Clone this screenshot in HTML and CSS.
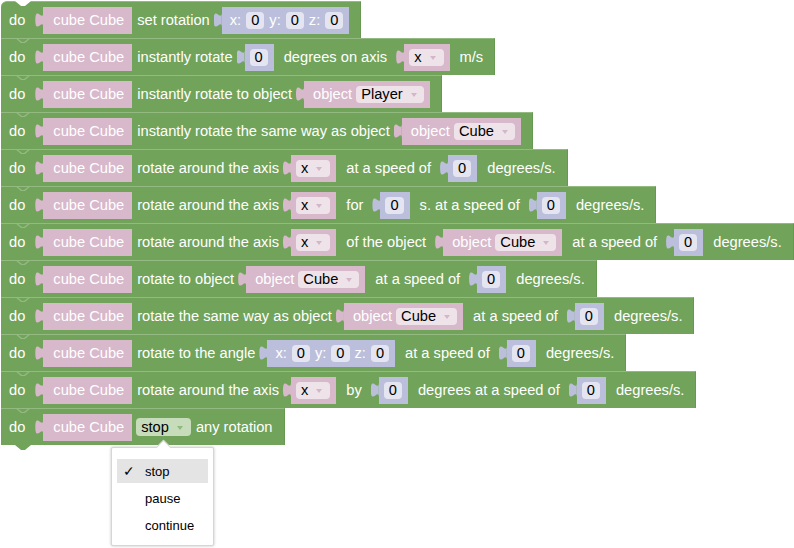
FILE: index.html
```html
<!DOCTYPE html>
<html lang="en">
<head>
    <meta charset="UTF-8">
    <title>Rotation blocks</title>
    <link rel="stylesheet" href="styles.css">
</head>
<body>

    <!-- Stos bloków "do" -->
    <div class="stack">

        <div class="blk first">
            <span class="do">do</span>
            <span class="inp pink"><span class="tab"></span><span class="body"><span class="txt">cube Cube</span></span></span>
            <span class="lbl">set rotation</span>
            <span class="inp blue"><span class="tab"></span><span class="body xyz"><span class="ax">x:</span><span class="fld">0</span><span class="ax">y:</span><span class="fld">0</span><span class="ax">z:</span><span class="fld">0</span></span></span>
        </div>

        <div class="blk">
            <span class="do">do</span>
            <span class="inp pink"><span class="tab"></span><span class="body"><span class="txt">cube Cube</span></span></span>
            <span class="lbl">instantly rotate</span>
            <span class="inp blue"><span class="tab"></span><span class="body num"><span class="fld">0</span></span></span>
            <span class="lbl sp">degrees on axis</span>
            <span class="inp pink"><span class="tab"></span><span class="body dd"><span class="fld">x<i class="arr"></i></span></span></span>
            <span class="lbl sp">m/s</span>
        </div>

        <div class="blk">
            <span class="do">do</span>
            <span class="inp pink"><span class="tab"></span><span class="body"><span class="txt">cube Cube</span></span></span>
            <span class="lbl">instantly rotate to object</span>
            <span class="inp pink"><span class="tab"></span><span class="body obj"><span class="txt">object</span><span class="fld">Player<i class="arr"></i></span></span></span>
        </div>

        <div class="blk">
            <span class="do">do</span>
            <span class="inp pink"><span class="tab"></span><span class="body"><span class="txt">cube Cube</span></span></span>
            <span class="lbl">instantly rotate the same way as object</span>
            <span class="inp pink"><span class="tab"></span><span class="body obj"><span class="txt">object</span><span class="fld">Cube<i class="arr"></i></span></span></span>
        </div>

        <div class="blk">
            <span class="do">do</span>
            <span class="inp pink"><span class="tab"></span><span class="body"><span class="txt">cube Cube</span></span></span>
            <span class="lbl">rotate around the axis</span>
            <span class="inp pink"><span class="tab"></span><span class="body dd"><span class="fld">x<i class="arr"></i></span></span></span>
            <span class="lbl sp">at a speed of</span>
            <span class="inp blue"><span class="tab"></span><span class="body num"><span class="fld">0</span></span></span>
            <span class="lbl sp">degrees/s.</span>
        </div>

        <div class="blk">
            <span class="do">do</span>
            <span class="inp pink"><span class="tab"></span><span class="body"><span class="txt">cube Cube</span></span></span>
            <span class="lbl">rotate around the axis</span>
            <span class="inp pink"><span class="tab"></span><span class="body dd"><span class="fld">x<i class="arr"></i></span></span></span>
            <span class="lbl sp">for</span>
            <span class="inp blue"><span class="tab"></span><span class="body num"><span class="fld">0</span></span></span>
            <span class="lbl sp">s. at a speed of</span>
            <span class="inp blue"><span class="tab"></span><span class="body num"><span class="fld">0</span></span></span>
            <span class="lbl sp">degrees/s.</span>
        </div>

        <div class="blk">
            <span class="do">do</span>
            <span class="inp pink"><span class="tab"></span><span class="body"><span class="txt">cube Cube</span></span></span>
            <span class="lbl">rotate around the axis</span>
            <span class="inp pink"><span class="tab"></span><span class="body dd"><span class="fld">x<i class="arr"></i></span></span></span>
            <span class="lbl sp">of the object</span>
            <span class="inp pink"><span class="tab"></span><span class="body obj"><span class="txt">object</span><span class="fld">Cube<i class="arr"></i></span></span></span>
            <span class="lbl sp">at a speed of</span>
            <span class="inp blue"><span class="tab"></span><span class="body num"><span class="fld">0</span></span></span>
            <span class="lbl sp">degrees/s.</span>
        </div>

        <div class="blk">
            <span class="do">do</span>
            <span class="inp pink"><span class="tab"></span><span class="body"><span class="txt">cube Cube</span></span></span>
            <span class="lbl">rotate to object</span>
            <span class="inp pink"><span class="tab"></span><span class="body obj"><span class="txt">object</span><span class="fld">Cube<i class="arr"></i></span></span></span>
            <span class="lbl sp">at a speed of</span>
            <span class="inp blue"><span class="tab"></span><span class="body num"><span class="fld">0</span></span></span>
            <span class="lbl sp">degrees/s.</span>
        </div>

        <div class="blk">
            <span class="do">do</span>
            <span class="inp pink"><span class="tab"></span><span class="body"><span class="txt">cube Cube</span></span></span>
            <span class="lbl">rotate the same way as object</span>
            <span class="inp pink"><span class="tab"></span><span class="body obj"><span class="txt">object</span><span class="fld">Cube<i class="arr"></i></span></span></span>
            <span class="lbl sp">at a speed of</span>
            <span class="inp blue"><span class="tab"></span><span class="body num"><span class="fld">0</span></span></span>
            <span class="lbl sp">degrees/s.</span>
        </div>

        <div class="blk">
            <span class="do">do</span>
            <span class="inp pink"><span class="tab"></span><span class="body"><span class="txt">cube Cube</span></span></span>
            <span class="lbl">rotate to the angle</span>
            <span class="inp blue"><span class="tab"></span><span class="body xyz"><span class="ax">x:</span><span class="fld">0</span><span class="ax">y:</span><span class="fld">0</span><span class="ax">z:</span><span class="fld">0</span></span></span>
            <span class="lbl sp">at a speed of</span>
            <span class="inp blue"><span class="tab"></span><span class="body num"><span class="fld">0</span></span></span>
            <span class="lbl sp">degrees/s.</span>
        </div>

        <div class="blk">
            <span class="do">do</span>
            <span class="inp pink"><span class="tab"></span><span class="body"><span class="txt">cube Cube</span></span></span>
            <span class="lbl">rotate around the axis</span>
            <span class="inp pink"><span class="tab"></span><span class="body dd"><span class="fld">x<i class="arr"></i></span></span></span>
            <span class="lbl sp">by</span>
            <span class="inp blue"><span class="tab"></span><span class="body num"><span class="fld">0</span></span></span>
            <span class="lbl sp">degrees at a speed of</span>
            <span class="inp blue"><span class="tab"></span><span class="body num"><span class="fld">0</span></span></span>
            <span class="lbl sp">degrees/s.</span>
        </div>

        <div class="blk last">
            <span class="do">do</span>
            <span class="inp pink"><span class="tab"></span><span class="body"><span class="txt">cube Cube</span></span></span>
            <span class="fld green">stop<i class="arr"></i></span>
            <span class="lbl">any rotation</span>
        </div>

    </div>

    <!-- Rozwinięte menu pola "stop" -->
    <div class="menu">
        <div class="menu-item active"><span class="check">✓</span>stop</div>
        <div class="menu-item"><span class="check"></span>pause</div>
        <div class="menu-item"><span class="check"></span>continue</div>
    </div>

</body>
</html>
```

FILE: styles.css
```css
body {
    margin: 0;
    background: #fff;
    font-family: "Liberation Sans", Arial, sans-serif;
    font-size: 14.67px;
    position: relative;
    height: 548px;
    overflow: hidden;
}

/* Stos bloków */
.stack {
    display: flex;
    flex-direction: column;
    align-items: flex-start;
    padding: 1px 0 0 1px;
}

.blk {
    position: relative;
    display: flex;
    align-items: center;
    width: max-content;
    height: 37px;
    box-sizing: border-box;
    padding: 0 11px 0 8px;
    background: #72a35b;
    border-top: 1px solid #93ba81;
    border-right: 1px solid #679851;
    color: #fff;
    white-space: pre;
}

/* wcięcie u góry bloku */
.blk::before {
    content: "";
    position: absolute;
    top: -1px;
    left: 14px;
    width: 16px;
    height: 5px;
    background: #93ba81;
    clip-path: polygon(0 0, 2px 0, 7px 4px, 9px 4px, 14px 0, 16px 0, 10px 5px, 6px 5px);
}

.blk.first {
    border-top-left-radius: 6px;
}

.blk.first::before {
    background: #fff;
    clip-path: polygon(0 0, 100% 0, 10px 5px, 6px 5px);
}

/* wypustka pod ostatnim blokiem */
.blk.last::after {
    content: "";
    position: absolute;
    top: 100%;
    left: 14px;
    width: 16px;
    height: 5px;
    background: #72a35b;
    clip-path: polygon(0 0, 100% 0, 10px 5px, 6px 5px);
}

.do {
    margin-right: 10px;
}

.lbl {
    margin: 0 4px 0 5px;
}

.lbl.sp {
    margin: 0 9px 0 10px;
}

.lbl:last-child {
    margin-right: 0;
}

/* Wejścia (shadow blocks) */
.inp {
    display: flex;
    align-items: flex-start;
}

.tab {
    width: 8px;
    height: 15px;
    margin-top: 6px;
    clip-path: path('M8,0 C8,10 0,-8 0,7.5 S8,5 8,15 Z');
}

.body {
    display: flex;
    align-items: center;
    height: 27px;
    box-sizing: border-box;
}

.pink .tab,
.pink .body {
    background: #d8b8cb;
}

.blue .tab,
.blue .body {
    background: #bbbfdb;
}

.body .txt {
    color: #fff;
}

.pink .body {
    padding: 0 8px 0 10px;
}

.pink .body.dd {
    padding: 0 6px 0 5px;
}

.pink .body.obj {
    padding: 0 6px 0 9px;
}

.body.obj .fld {
    margin-left: 4px;
}

.blue .body.num {
    padding: 0 6px 0 5px;
}

.blue .body.xyz {
    padding: 0 6px 0 8px;
}

.xyz .ax {
    color: #fff;
}

.xyz .ax + .fld {
    margin-left: 5px;
}

.xyz .fld + .ax {
    margin-left: 5px;
}

/* Pola edycyjne */
.fld {
    display: inline-flex;
    align-items: center;
    height: 17px;
    padding: 0 5px;
    border-radius: 4px;
    background: rgba(255, 255, 255, 0.6);
    color: #000;
}

.fld .arr {
    display: inline-block;
    width: 0;
    height: 0;
    margin: 1px 3px 0 8px;
    border-left: 3px solid transparent;
    border-right: 3px solid transparent;
    border-top: 4px solid #d3b6c7;
}

.obj .fld .arr {
    margin-right: 2px;
}

.fld.green {
    height: 18px;
    margin: 0 0 0 4px;
    background: #c6dcbb;
}

.fld.green .arr {
    border-top-color: #8fb97d;
}

/* Menu rozwijane */
.menu {
    position: absolute;
    left: 111px;
    top: 447px;
    width: 103px;
    height: 99px;
    box-sizing: border-box;
    padding: 11px 5px 0;
    background: #fff;
    border: 1px solid #d6d6d6;
    border-radius: 2px;
    box-shadow: 0 0 3px rgba(0, 0, 0, 0.25);
    font-size: 13px;
    color: #000;
}

.menu::before {
    content: "";
    position: absolute;
    left: 46px;
    top: -6px;
    width: 10px;
    height: 10px;
    background: #fff;
    border-top: 1px solid #d6d6d6;
    border-left: 1px solid #d6d6d6;
    transform: rotate(45deg);
}

.menu-item {
    display: flex;
    align-items: center;
    height: 24px;
    margin-bottom: 3px;
}

.menu-item.active {
    background: #e4e4e4;
}

.check {
    width: 28px;
    padding-left: 6px;
    box-sizing: border-box;
    font-size: 14px;
}
```
